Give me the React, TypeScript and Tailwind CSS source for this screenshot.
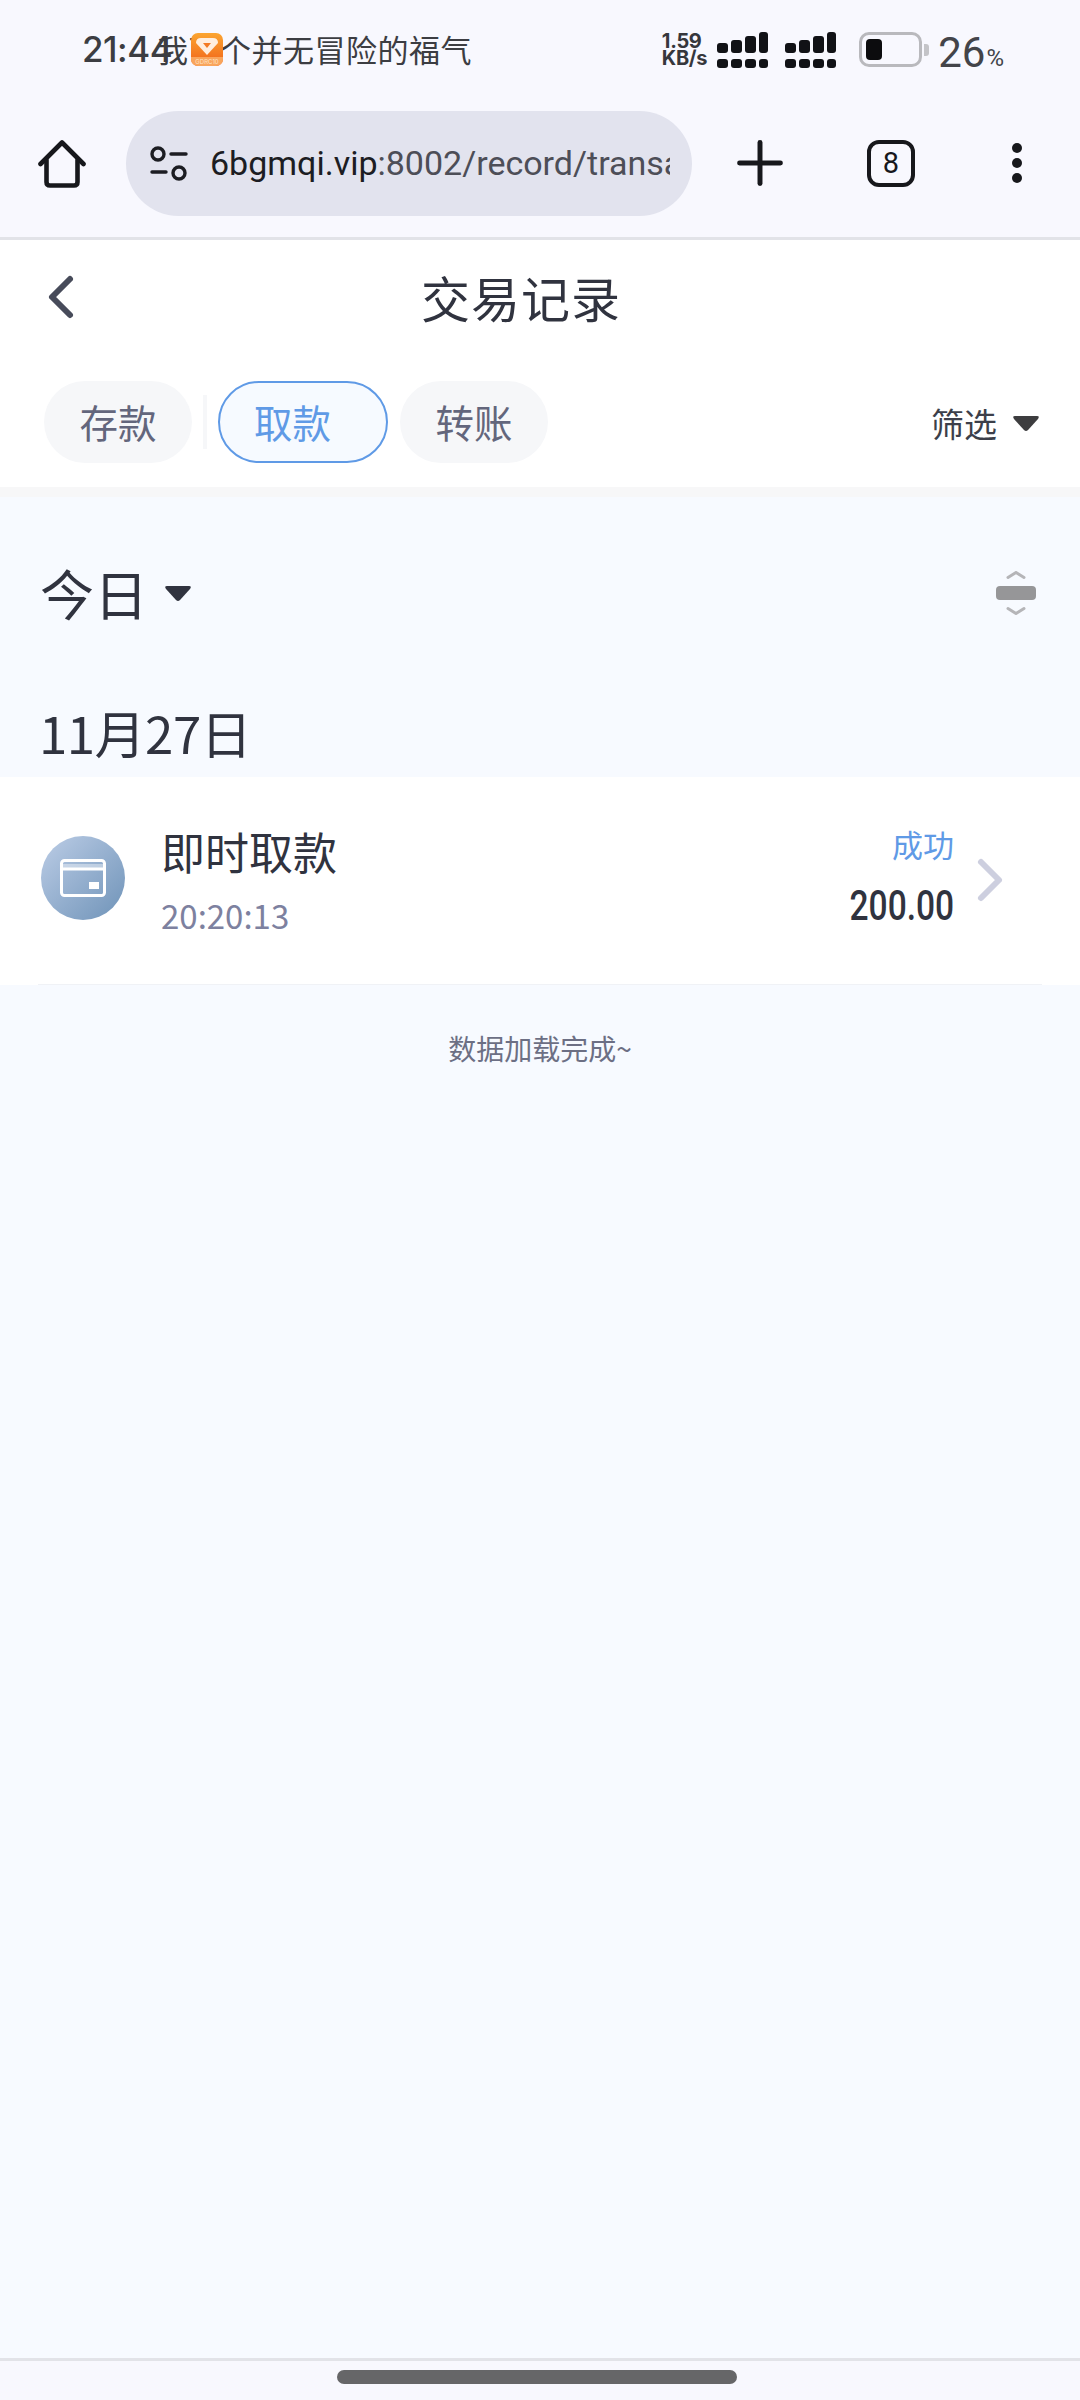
import React from "react";
import { LuPlus, LuChevronLeft, LuChevronRight } from "react-icons/lu";

const cjk = "font-['Noto_Sans_CJK_SC','Noto_Sans',sans-serif]";

const Signal = () => (
  <svg width="51" height="36" viewBox="0 0 51 36" fill="currentColor">
    <rect x="0" y="11" width="11" height="10" rx="3" />
    <rect x="14" y="8" width="11" height="13" rx="3" />
    <rect x="28" y="4" width="11" height="17" rx="3" />
    <rect x="42" y="0" width="9" height="21" rx="3" />
    <rect x="0" y="27" width="11" height="9" rx="3" />
    <rect x="14" y="27" width="11" height="9" rx="3" />
    <rect x="28" y="27" width="11" height="9" rx="3" />
    <rect x="42" y="27" width="9" height="9" rx="3" />
  </svg>
);

const Caret = ({ color }: { color: string }) => (
  <svg width="28" height="17" viewBox="0 0 28 17" fill={color}>
    <path d="M3 1 H25 Q28 1 26 4 L16 15 Q14 17 12 15 L2 4 Q0 1 3 1 Z" />
  </svg>
);

const StatusBar = () => (
  <div className="relative h-[100px] flex items-start justify-between pl-[82px] pr-[76px] pt-[28px] text-[#3c3d42]">
    <span className="text-[35px] leading-[42px] font-medium font-['Inter',sans-serif] tracking-[-0.5px]">21:44</span>
    <div className={`absolute left-[157px] top-[28px] text-[31px] leading-[42px] tracking-[0.5px] ${cjk}`}>我下个并无冒险的福气</div>
    {/* app notification icon sits on top of the ticker text */}
    <div className="absolute left-[191px] top-[33px] w-[32px] h-[33px] rounded-[7px] bg-gradient-to-b from-[#fba531] to-[#ef5f18] flex flex-col items-center overflow-hidden">
      <svg width="24" height="19" viewBox="0 0 24 19" className="mt-[4px]">
        <path d="M1 6 Q1 1 6 1 H18 Q23 1 23 6 L12 18 Z" fill="#ffeede" />
        <path d="M8 6 H16 L12 11 Z" fill="#f47a22" />
      </svg>
      <div className="w-full mt-auto h-[9px] bg-[#f9a55c] text-[6px] leading-[9px] text-center text-[#ffe3c4] font-['Inter',sans-serif]">GDRC10</div>
    </div>
    <div className="flex items-start">
      <div className="flex flex-col items-start mt-[5px] mr-[10px] text-[20px] leading-[17px] font-bold font-['Inter',sans-serif] text-[#36373c] tracking-[-0.3px]">
        <span>1.59</span>
        <span>KB/s</span>
      </div>
      <div className="flex gap-[17px] text-[#111216] mt-[4px]">
        <Signal />
        <Signal />
      </div>
      <div className="ml-[23px] mt-[4px] flex items-center">
        <div className="w-[63px] h-[35px] rounded-[10px] border-[3px] border-[#b9b9bd] p-[4px]">
          <div className="w-[16px] h-full rounded-[4px] bg-[#0c0c0e]" />
        </div>
        <div className="w-[5px] h-[12px] ml-[2px] rounded-r-[3px] bg-[#c4c4c8]" />
      </div>
      <span className="ml-[9px] text-[42px] leading-[46px] font-['Roboto',sans-serif] text-[#434449] mt-[2px]">26</span>
      <span className="ml-[1px] mt-[15px] text-[24px] leading-[30px] font-['Roboto',sans-serif] text-[#434449]">%</span>
    </div>
  </div>
);

const Toolbar = () => (
  <div className="h-[140px] bg-[#f8f8fe] flex items-start border-b-[3px] border-[#e2e3e8] text-[#17181c]">
    <svg width="48" height="48" viewBox="0 0 48 48" fill="none" stroke="#17181c" strokeWidth="4.6" strokeLinecap="round" strokeLinejoin="round" className="ml-[38px] mt-[40px] shrink-0">
      <path d="M2.5 24 L24 2.5 L45.5 24" />
      <path d="M8.5 20 V42 Q8.5 45.5 12 45.5 H36 Q39.5 45.5 39.5 42 V20" />
    </svg>
    <div className="ml-[40px] mt-[11px] w-[566px] h-[105px] shrink-0 rounded-full bg-[#e2e3ee] flex items-center pl-[23px] pr-[22px]">
      <svg width="40" height="36" viewBox="0 0 40 36" fill="none" stroke="#1c1d22" strokeWidth="3.4" strokeLinecap="round" className="shrink-0">
        <circle cx="9" cy="8" r="6" />
        <path d="M22 8 H37" />
        <path d="M3 26 H17" />
        <circle cx="30" cy="27" r="6" />
      </svg>
      <div className="ml-[21px] min-w-0 overflow-hidden whitespace-nowrap text-[34px] font-['Roboto',sans-serif] text-[#4d4e57]">
        <span className="text-[#1c1d22]">6bgmqi.vip</span>:8002/record/transa
      </div>
    </div>
    <LuPlus className="ml-[33px] mt-[28px] w-[70px] h-[70px] shrink-0" strokeWidth={1.7} />
    <div className="ml-[72px] mt-[40px] w-[48px] h-[47px] shrink-0 rounded-[12px] border-[4px] border-[#17181c] flex items-center justify-center text-[29px] leading-none font-['Roboto',sans-serif]">
      8
    </div>
    <div className="ml-[97px] mt-[43px] flex flex-col gap-[5px]">
      <div className="w-[10px] h-[10px] rounded-full bg-[#17181c]" />
      <div className="w-[10px] h-[10px] rounded-full bg-[#17181c]" />
      <div className="w-[10px] h-[10px] rounded-full bg-[#17181c]" />
    </div>
  </div>
);

const Tab = ({ label, active }: { label: string; active?: boolean }) => (
  <div
    className={
      active
        ? "w-[170px] h-[82px] rounded-full border-2 border-[#5f9ae6] bg-[#f6faff] text-[#5f9ae6] flex items-center justify-center pr-[21px] text-[38.5px]"
        : "w-[148px] h-[82px] rounded-full bg-[#f6f7f9] text-[#63667c] flex items-center justify-center text-[38.5px]"
    }
  >
    {label}
  </div>
);

export default function App() {
  return (
    <div className={`w-[1080px] h-[2400px] flex flex-col bg-[#f7faff] overflow-hidden ${cjk}`}>
      <div className="bg-[#f8f8fe]">
        <StatusBar />
        <Toolbar />
      </div>

      {/* Header + tabs */}
      <div className="bg-white h-[257px] shrink-0 border-b-[10px] border-[#f7f7f8]">
        <div className="relative h-[141px] flex items-start justify-center pt-[24px] pr-[38px]">
          <LuChevronLeft className="absolute left-[25px] top-[21px] w-[72px] h-[72px] text-[#474b5a]" strokeWidth={2} />
          <span className="text-[49px] leading-[66px] text-[#30333f] tracking-[1px]">交易记录</span>
        </div>
        <div className="flex items-center pl-[44px] pr-[40px]">
          <Tab label="存款" />
          <div className="w-[4px] h-[54px] bg-[#f6f7f9] ml-[11px] mr-[11px]" />
          <Tab label="取款" active />
          <div className="w-[12px]" />
          <Tab label="转账" />
          <div className="ml-auto flex items-center gap-[15px] text-[#3c3f4a] text-[33px] pt-[3px]">
            <span>筛选</span>
            <Caret color="#3d3d3f" />
          </div>
        </div>
      </div>

      {/* Date range */}
      <div className="h-[184px] shrink-0 flex items-center justify-between pl-[40px] pr-[44px] pt-[8px]">
        <div className="flex items-center gap-[16px] text-[#30333f]">
          <span className="text-[54px] leading-[72px]">今日</span>
          <Caret color="#30333f" />
        </div>
        <svg width="40" height="44" viewBox="0 0 40 44">
          <path d="M12 6.5 L20 1.5 L28 6.5" fill="none" stroke="#b5b5b8" strokeWidth="3" strokeLinecap="round" />
          <rect x="0" y="15" width="40" height="14" rx="4" fill="#969698" />
          <path d="M12 37.5 L20 42.5 L28 37.5" fill="none" stroke="#b5b5b8" strokeWidth="3" strokeLinecap="round" />
        </svg>
      </div>

      <div className="h-[96px] shrink-0 flex items-end pl-[39px] pb-[13px] text-[51px] leading-[64px] text-[#30333f]">
        <span className="tracking-[-0.5px]">11月27日</span>
      </div>

      {/* Transaction row */}
      <div className="bg-white h-[208px] shrink-0 px-[38px]">
        <div className="h-full border-b-[1px] border-[#f0f2f6] flex items-start">
          <div className="mt-[59px] ml-[3px] w-[84px] h-[84px] shrink-0 rounded-full bg-gradient-to-br from-[#bccde6] to-[#6f93b8] flex items-center justify-center">
            <svg width="46" height="38" viewBox="0 0 46 38" fill="none">
              <rect x="1.5" y="1.5" width="43" height="35" rx="3" stroke="white" strokeWidth="3" />
              <path d="M1.5 10 H44.5" stroke="white" strokeWidth="3" />
              <path d="M1.5 7 H44.5" stroke="#ffffff" strokeOpacity="0.4" strokeWidth="4" />
              <rect x="29" y="23" width="10" height="7" fill="white" />
            </svg>
          </div>
          <div className="ml-[36px] mt-[44px] flex flex-col">
            <span className="text-[44px] leading-[60px] text-[#30333f]">即时取款</span>
            <span className="mt-[11px] text-[33px] leading-[46px] text-[#7d819f]">20:20:13</span>
          </div>
          <div className="ml-auto mt-[47px] flex flex-col items-end">
            <span className="text-[31px] leading-[40px] text-[#5f9ae6]">成功</span>
            <span className="mt-[17px] text-[43px] leading-[48px] font-medium text-[#30333f] font-['Roboto',sans-serif] origin-right scale-x-[0.78]">200.00</span>
          </div>
          <LuChevronRight className="mr-[16px] mt-[67px] w-[72px] h-[72px] shrink-0 text-[#cdcfdf]" strokeWidth={2} />
        </div>
      </div>

      <div className="pt-[43px] text-center text-[28px] leading-[40px] text-[#6c6f84] flex-1">数据加载完成~</div>

      {/* Gesture bar */}
      <div className="h-[42px] shrink-0 bg-[#f8f8fe] border-t-[3px] border-[#e2e3e8] flex justify-center pt-[9px] pr-[6px]">
        <div className="w-[400px] h-[14px] rounded-full bg-[#666668]" />
      </div>
    </div>
  );
}
